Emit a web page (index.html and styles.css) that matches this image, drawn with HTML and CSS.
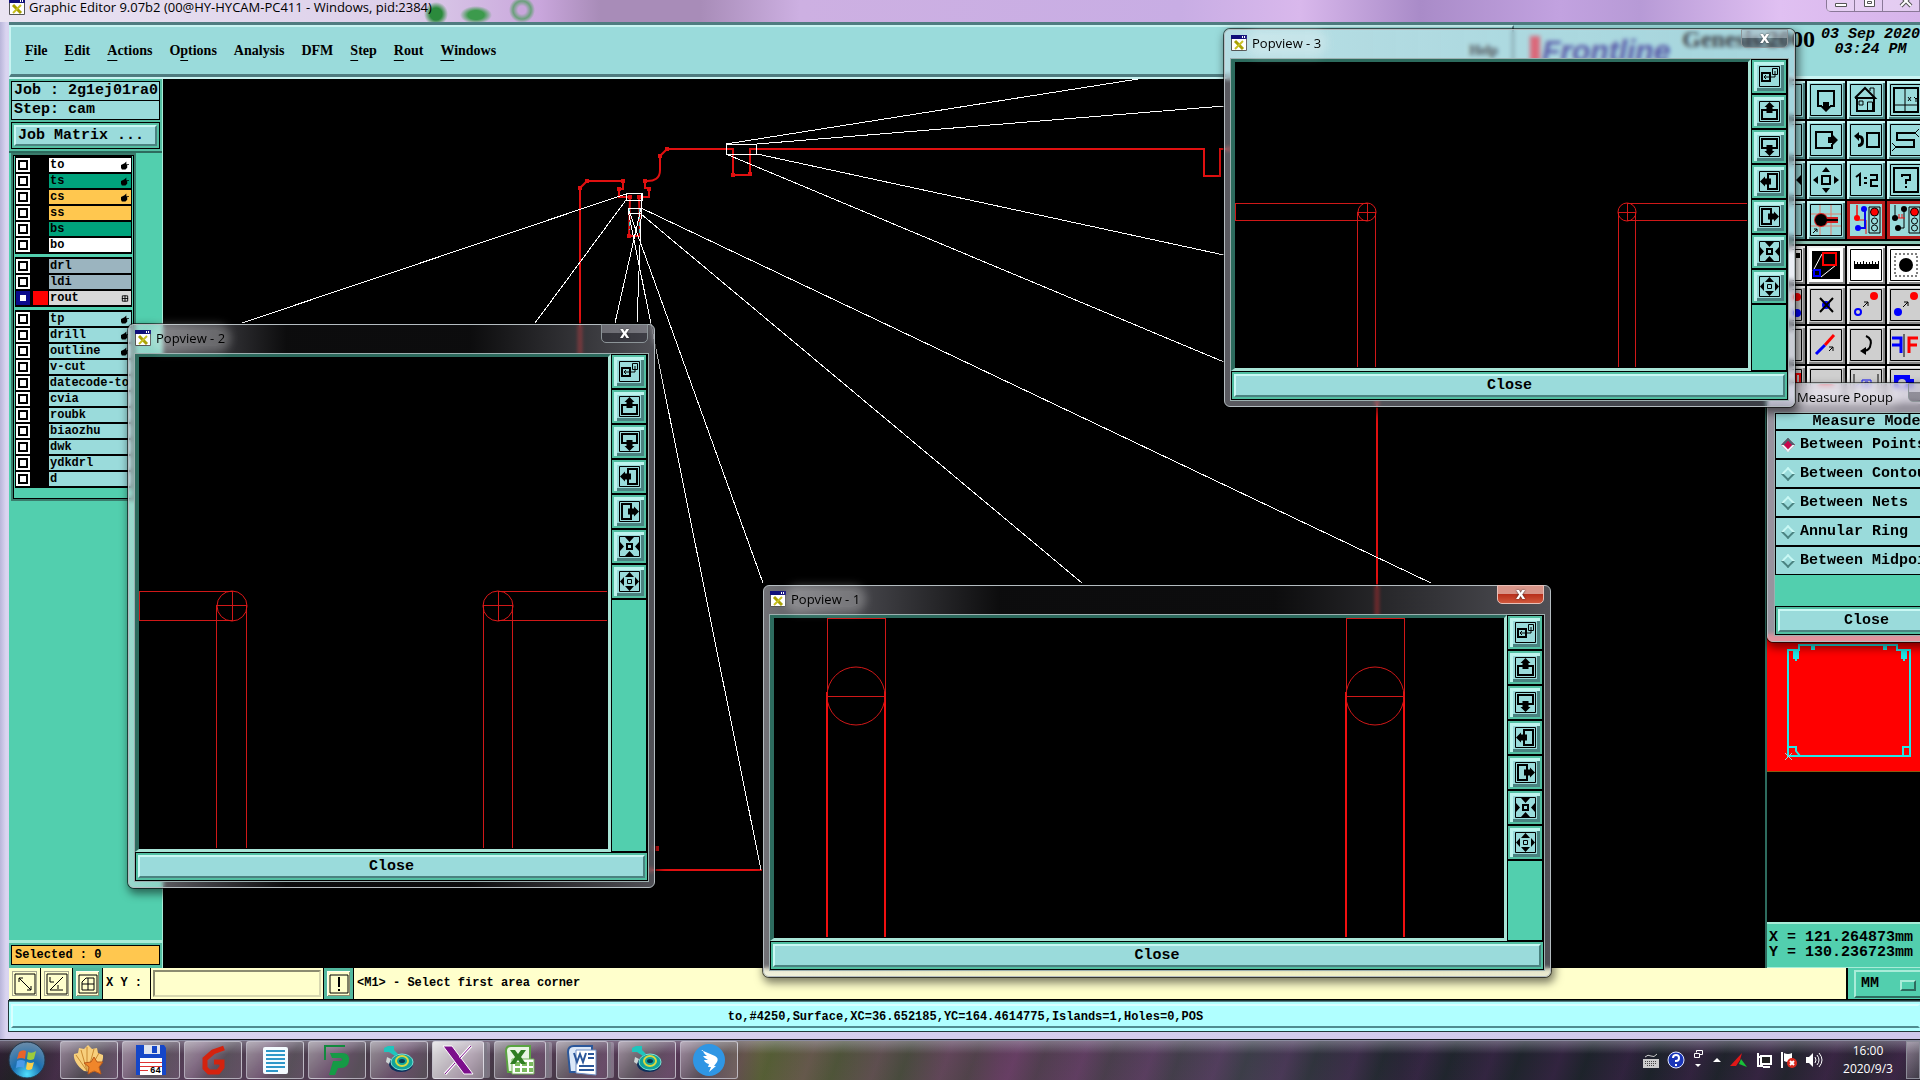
FILE: index.html
```html
<!DOCTYPE html>
<html lang="en">
<head>
  <meta charset="UTF-8">
  <meta name="viewport" content="width=device-width, initial-scale=1.0">
  <title>Graphic Editor 9.07b2</title>
  <link rel="stylesheet" href="styles.css">
</head>
<body>
  <!-- Shared icons -->
  <svg class="sprite" aria-hidden="true">
    <symbol id="i-app" viewBox="0 0 16 16"><path fill="#fff" stroke="#555" d="M.5.5h15v15H.5z"/><path fill="#10107a" d="M0 0h16v4H0z"/><path fill="#fff" d="M11 1h1v2h-1zM13 1h1v2h-1z"/><path stroke="#a8a000" stroke-width="3" d="M4 6l8 8"/><path stroke="#c8c020" stroke-width="2" d="M12 6l-8 8"/></symbol>
    <symbol id="i-pop" viewBox="0 0 21 21"><path fill="none" stroke="#000" d="M.5.5h20v20H.5zM13.500 2.500h5v6h-5zM16 5v6h-5M5 11h6M7 9l-2 2 2 2"/><path fill="none" stroke="#000" stroke-width="2" d="M3 7h8v8H3z"/></symbol>
    <symbol id="i-up" viewBox="0 0 21 21"><path fill="none" stroke="#000" d="M.5.5h20v20H.5z"/><path fill="none" stroke="#000" stroke-width="2" d="M8 9H3v9h15V9h-5"/><path d="M10.500 1l5 5h-2v6h-6V6h-2z"/></symbol>
    <symbol id="i-down" viewBox="0 0 21 21"><path fill="none" stroke="#000" d="M.5.5h20v20H.5z"/><path fill="none" stroke="#000" stroke-width="2" d="M8 12H3V3h15v9h-5"/><path d="M10.500 20l5-5h-2V9h-6v6h-2z"/></symbol>
    <symbol id="i-left" viewBox="0 0 21 21"><path fill="none" stroke="#000" d="M.5.5h20v20H.5z"/><path fill="none" stroke="#000" stroke-width="2" d="M9 8V3h9v15H9v-5"/><path d="M1 10.500l5-5v2h6v6H6v2z"/></symbol>
    <symbol id="i-right" viewBox="0 0 21 21"><path fill="none" stroke="#000" d="M.5.5h20v20H.5z"/><path fill="none" stroke="#000" stroke-width="2" d="M12 8V3H3v15h9v-5"/><path d="M20 10.500l-5-5v2H9v6h6v2z"/></symbol>
    <symbol id="i-in" viewBox="0 0 21 21"><path fill="none" stroke="#000" d="M.5.5h20v20H.5z"/><path fill="none" stroke="#000" stroke-width="2" d="M8 8h5v5H8z"/><path d="M6 1h9l-4.500 5zM6 20h9l-4.500-5zM1 6v9l4-4.500zM20 6v9l-4-4.500z"/></symbol>
    <symbol id="i-out" viewBox="0 0 21 21"><path fill="none" stroke="#000" d="M.5.5h20v20H.5zM8.500 8.500h4v4h-4z"/><path d="M6 6h9l-4.500-5zM6 15h9l-4.500 5zM5 6v9l-4-4.500zM16 6v9l4-4.500z"/></symbol>
    <symbol id="i-hand" viewBox="0 0 9 9"><path d="M0 4l4-2 2-2v3h3v1H7v3L5 9H1L0 7z"/></symbol>
    <symbol id="i-reel" viewBox="0 0 32 32"><ellipse cx="18" cy="20" rx="12" ry="8" fill="#0b2f5c"/><ellipse cx="19" cy="18" rx="11" ry="8" fill="#12a39b" stroke="#7de3d6"/><ellipse cx="19" cy="17" rx="6" ry="5" fill="none" stroke="#d8d840" stroke-width="2"/><ellipse cx="19" cy="17" rx="3" ry="2" fill="#083d52"/><path d="M1 4l4-2h6v4l4 4-3 2-6-4H1z" fill="#1fc5bd"/><path d="M4 13l4 2-2 5-3-2z" fill="#cdd5d5"/></symbol>
  </svg>

  <div class="editor">
    <header class="titlebar">
      <svg class="app-icon"><use href="#i-app"/></svg>
      <h1>Graphic Editor 9.07b2 (00@HY-HYCAM-PC411 - Windows, pid:2384)</h1>
      <div class="window-buttons">
        <button type="button" aria-label="Minimize"><svg viewBox="0 0 28 12"><path fill="#fff" stroke="#555" d="M8.500 3.500h11v3h-11z"/></svg></button>
        <button type="button" aria-label="Maximize"><svg viewBox="0 0 28 12"><path fill="#fff" stroke="#555" d="M9.500-3.500h10v10h-10zM12.500 1.500h4v2h-4z"/></svg></button>
        <button type="button" class="wide" aria-label="Close window"><svg viewBox="0 0 28 12"><path stroke="#555" stroke-width="4" d="M4-4l10 10M14-4L4 6"/><path stroke="#fff" stroke-width="2" d="M4-4l10 10M14-4L4 6"/></svg></button>
      </div>
    </header>

    <div class="menubar">
      <nav class="menus">
        <a href="#"><u>F</u>ile</a>
        <a href="#"><u>E</u>dit</a>
        <a href="#"><u>A</u>ctions</a>
        <a href="#">O<u>p</u>tions</a>
        <a href="#">Analysis</a>
        <a href="#">DFM</a>
        <a href="#"><u>S</u>tep</a>
        <a href="#"><u>R</u>out</a>
        <a href="#"><u>W</u>indows</a>
        <a href="#" class="help">Help</a>
      </nav>
      <div class="brand">
        <span class="logo"><i></i>Frontline</span>
        <span class="product">Genesis 2000</span>
        <time>03 Sep 2020<br>03:24 PM</time>
      </div>
    </div>

    <main class="workspace">
      <aside class="sidebar">
        <div class="field">Job : 2g1ej01ra0</div>
        <div class="field">Step: cam</div>
        <div class="matrix"><button type="button">Job Matrix ...</button></div>
        <div class="layer-panel">
          <div class="layers">
            <div class="layer-group">
              <label class="layer"><input type="checkbox"><span class="swatch"></span><span class="name white">to<svg><use href="#i-hand"/></svg></span></label>
              <label class="layer"><input type="checkbox"><span class="swatch"></span><span class="name green">ts<svg><use href="#i-hand"/></svg></span></label>
              <label class="layer"><input type="checkbox"><span class="swatch"></span><span class="name orange">cs<svg><use href="#i-hand"/></svg></span></label>
              <label class="layer"><input type="checkbox"><span class="swatch"></span><span class="name orange">ss</span></label>
              <label class="layer"><input type="checkbox"><span class="swatch"></span><span class="name green">bs</span></label>
              <label class="layer"><input type="checkbox"><span class="swatch"></span><span class="name white">bo</span></label>
            </div>
            <div class="layer-group">
              <label class="layer"><input type="checkbox"><span class="swatch"></span><span class="name slate">drl</span></label>
              <label class="layer"><input type="checkbox"><span class="swatch"></span><span class="name slate">ldi</span></label>
              <label class="layer"><input type="checkbox" checked><span class="swatch red"></span><span class="name grey">rout<svg viewBox="0 0 9 9"><path fill="none" stroke="#000" d="M1.500 1.500h6v6h-6zM4.500 1v7M1 4.500h7"/></svg></span></label>
            </div>
            <div class="layer-group">
              <label class="layer"><input type="checkbox"><span class="swatch"></span><span class="name">tp<svg><use href="#i-hand"/></svg></span></label>
              <label class="layer"><input type="checkbox"><span class="swatch"></span><span class="name">drill<svg><use href="#i-hand"/></svg></span></label>
              <label class="layer"><input type="checkbox"><span class="swatch"></span><span class="name">outline<svg><use href="#i-hand"/></svg></span></label>
              <label class="layer"><input type="checkbox"><span class="swatch"></span><span class="name">v-cut</span></label>
              <label class="layer"><input type="checkbox"><span class="swatch"></span><span class="name">datecode-to</span></label>
              <label class="layer"><input type="checkbox"><span class="swatch"></span><span class="name">cvia</span></label>
              <label class="layer"><input type="checkbox"><span class="swatch"></span><span class="name">roubk</span></label>
              <label class="layer"><input type="checkbox"><span class="swatch"></span><span class="name">biaozhu</span></label>
              <label class="layer"><input type="checkbox"><span class="swatch"></span><span class="name">dwk</span></label>
              <label class="layer"><input type="checkbox"><span class="swatch"></span><span class="name">ydkdrl</span></label>
              <label class="layer"><input type="checkbox"><span class="swatch"></span><span class="name">d</span></label>
            </div>
          </div>
        </div>
        <div class="selected">Selected : 0</div>
      </aside>

      <div class="board">
        <svg viewBox="163 79 1602 889" preserveAspectRatio="xMinYMin meet">
          <g fill="none" stroke="#e01010" stroke-width="2">
            <path d="M762 870H580V188L587 181H623V189H619V197H630L629 236H640L639 197H649V188H645V181Q660 182 660 170V156L667 149H733V175H750V149H1204V176H1220V149H1370L1377 156V870H1300"/>
          </g>
          <path fill="#e01010" d="M578 186h4v4h-4zM585 179h4v4h-4zM621 179h4v4h-4zM617 187h4v4h-4zM647 187h4v4h-4zM643 179h4v4h-4zM658 154h4v4h-4zM665 147h4v4h-4zM731 173h4v4h-4zM748 172h4v4h-4zM627 234h4v4h-4zM628 195h4v4h-4zM637 195h4v4h-4zM654 846h5v5h-5z"/>
          <path stroke="#40c8c8" stroke-dasharray="4 3" d="M629.500 208v22M639.500 208v28"/>
          <g fill="none" stroke="#fff" shape-rendering="crispEdges">
            <path d="M726.500 144.500h30v10h-30zM626.500 193.500h16v7h-16zM628.500 208.500h13v5h-13z"/>
            <path d="M626 194L242 323M626 200L535 323M641 208L615 323M642 194L637 323M628 210L761 870M628 208L763 583M641 208L1431 583M641 214L1082 583M726 144L1138 79M757 144L1224 106M757 154L1224 255M726 154L1224 362"/>
          </g>
        </svg>
      </div>

      <aside class="tools">
        <div class="tool-grid">
          <button type="button" aria-label="Pan up"><svg viewBox="0 0 32 32"><path fill="none" stroke="#000" d="M.5.5h31v31H.5z"/></svg></button>
          <button type="button" aria-label="Pan down"><svg viewBox="0 0 32 32"><path fill="none" stroke="#000" d="M.5.5h31v31H.5z"/><path fill="none" stroke="#000" stroke-width="2" d="M12 22H8V7h16v15h-4"/><path d="M13 18h6v4h3l-6 6-6-6h3z"/></svg></button>
          <button type="button" aria-label="Home"><svg viewBox="0 0 32 32"><path fill="none" stroke="#000" d="M.5.5h31v31H.5zM9 17h4v4H9zM17.500 27v-9h5v9M20 7V4h4v9"/><path fill="none" stroke="#000" stroke-width="2" d="M5 14L15 4l10 10H5M7 14v13h17V14"/></svg></button>
          <button type="button" aria-label="XY view"><svg viewBox="0 0 32 32"><path fill="none" stroke="#000" d="M.5.5h31v31H.5zM15 4v24M4 21h24M18 13l3 4M21 13l-3 4M24 13l2 2 2-2M26 15v3"/><path fill="none" stroke="#000" stroke-width="2" d="M4 4h24v24H4z"/></svg></button>

          <button type="button" aria-label="Pan left"><svg viewBox="0 0 32 32"><path fill="none" stroke="#000" d="M.5.5h31v31H.5z"/></svg></button>
          <button type="button" aria-label="Pan right"><svg viewBox="0 0 32 32"><path fill="none" stroke="#000" d="M.5.5h31v31H.5z"/><path fill="none" stroke="#000" stroke-width="2" d="M22 13V8H6v16h16v-4"/><path d="M18 13h4v-3l6 6-6 6v-3h-4z"/></svg></button>
          <button type="button" aria-label="Previous view"><svg viewBox="0 0 32 32"><path fill="none" stroke="#000" d="M.5.5h31v31H.5z"/><path fill="none" stroke="#000" stroke-width="2" d="M17 9h12v14H17z"/><path d="M4 12l5-4v3q5 0 5 6t-6 6v-3q3 0 3-3t-2-3v3z"/></svg></button>
          <button type="button" aria-label="Serpentine"><svg viewBox="0 0 32 32"><path fill="none" stroke="#000" d="M.5.5h31v31H.5zM25 9l4-4M25 9l4 4M6 23l-4-4M6 23l-4 4"/><path fill="none" stroke="#000" stroke-width="2" d="M25 9H7v7h17v7H6"/></svg></button>

          <button type="button" aria-label="Zoom in"><svg viewBox="0 0 32 32"><path fill="none" stroke="#000" d="M.5.5h31v31H.5z"/><path d="M31 11v10l-5-5z"/></svg></button>
          <button type="button" aria-label="Zoom out"><svg viewBox="0 0 32 32"><path fill="none" stroke="#000" d="M.5.5h31v31H.5z"/><path fill="none" stroke="#000" stroke-width="2" d="M12 12h8v8h-8z"/><path d="M12 8h8l-4-5zM12 24h8l-4 5zM8 12v8l-5-4zM24 12v8l5-4z"/></svg></button>
          <button type="button" aria-label="Scale 1:2"><svg viewBox="0 0 32 32"><path fill="none" stroke="#000" d="M.5.5h31v31H.5z"/><path fill="none" stroke="#000" stroke-width="2" d="M6 13l4-3v12M20 11h7v5h-6v6h7"/><path d="M14 13h3v2h-3zM14 18h3v2h-3z"/></svg></button>
          <button type="button" aria-label="Query"><svg viewBox="0 0 32 32"><path fill="none" stroke="#000" d="M.5.5h31v31H.5z"/><path fill="none" stroke="#000" stroke-width="2" d="M4 4h24v24H4zM12 13v-2h8v5h-4v4M16 22v2"/></svg></button>

          <button type="button" aria-label="Grid"><svg viewBox="0 0 32 32"><path fill="none" stroke="#000" d="M.5.5h31v31H.5z"/></svg></button>
          <button type="button" aria-label="Snap"><svg viewBox="0 0 32 32"><path stroke="#e08070" d="M10 1v30M21 1v30M1 10h30M1 22h30"/><path fill="none" stroke="#000" d="M.5.5h31v31H.5zM3 29l4-4M4 25h3v3"/><path stroke="#d02020" stroke-width="6" d="M10 16h18"/><circle cx="11" cy="16" r="7" fill="#d02020"/><path stroke="#000" stroke-width="2" d="M10 16h18"/><circle cx="11" cy="16" r="6"/></svg></button>
          <button type="button" class="alert" aria-label="Net highlight"><svg viewBox="0 0 32 32"><path fill="none" stroke="#f01010" d="M7 1v15h9v14M7 12V1"/><path fill="none" stroke="#0808f0" stroke-width="2" d="M15 6v18H9"/><circle cx="7" cy="14" r="3" fill="#f00"/><circle cx="14" cy="5" r="3" fill="#00f"/><circle cx="8" cy="24" r="3" fill="#00f"/><path fill="none" stroke="#000" d="M19 3h11v26H19z"/><g stroke="#000"><circle cx="24.500" cy="8" r="4" fill="#f00"/><circle cx="24.500" cy="17" r="3" fill="none"/><circle cx="24.500" cy="24" r="3" fill="none"/></g></svg></button>
          <button type="button" class="alert" aria-label="Net check"><svg viewBox="0 0 32 32"><path fill="none" stroke="#000" d="M5 1v13M14 6v18H8"/><path stroke="#f01010" d="M7 14h8M9 10v4M12 10v4"/><circle cx="5" cy="14" r="3"/><circle cx="14" cy="5" r="3"/><circle cx="8" cy="24" r="3"/><path fill="none" stroke="#000" d="M19 3h11v26H19z"/><g stroke="#000"><circle cx="24.500" cy="8" r="4" fill="#f00"/><circle cx="24.500" cy="17" r="3" fill="none"/><circle cx="24.500" cy="24" r="3" fill="none"/></g></svg></button>
        </div>
        <div class="tool-grid edit">
          <button type="button" class="white" aria-label="Select"><svg viewBox="0 0 32 32"><path fill="none" stroke="#000" d="M.5.5h31v31H.5z"/><path d="M26 4h4v5h-4z"/></svg></button>
          <button type="button" class="white" aria-label="Popview"><svg viewBox="0 0 32 32"><path d="M2 2h28v28H2z"/><path stroke="#fff" d="M3 22L12 5M11 28l15-12"/><path fill="none" stroke="#f00" stroke-width="2" d="M13 4h13v12H13z"/><path fill="none" stroke="#00f" stroke-width="2" d="M4 21h6v6H4z"/></svg></button>
          <button type="button" class="white" aria-label="Measure"><svg viewBox="0 0 32 32"><path fill="none" stroke="#000" d="M.5.5h31v31H.5z"/><path d="M4 15h25v5H4z"/><path stroke="#000" d="M4.500 12v6M7.500 13v5M10.500 13v5M13.500 12v6M16.500 13v5M19.500 13v5M22.500 12v6M25.500 13v5M28.500 12v6"/></svg></button>
          <button type="button" class="white" aria-label="Feature select"><svg viewBox="0 0 32 32"><path fill="none" stroke="#000" d="M.5.5h31v31H.5z"/><path fill="none" stroke="#000" stroke-dasharray="2 2" d="M5 5h22v22H5z"/><circle cx="16" cy="16" r="7"/></svg></button>

          <button type="button" aria-label="Add"><svg viewBox="0 0 32 32"><path fill="none" stroke="#000" d="M.5.5h31v31H.5z"/><circle cx="27" cy="8" r="4" fill="#f00"/><circle cx="27" cy="24" r="4" fill="#00f"/></svg></button>
          <button type="button" aria-label="Delete"><svg viewBox="0 0 32 32"><path fill="none" stroke="#000" d="M.5.5h31v31H.5z"/><circle cx="16" cy="16" r="4" fill="#00f"/><path stroke="#000" stroke-width="2" d="M10 9l13 14M23 9L10 23"/></svg></button>
          <button type="button" aria-label="Move"><svg viewBox="0 0 32 32"><path fill="none" stroke="#000" d="M.5.5h31v31H.5zM13 18l5-5M14 13h4v4"/><circle cx="24" cy="7" r="4" fill="#f00"/><circle cx="8" cy="23" r="3" fill="none" stroke="#00f" stroke-width="2"/></svg></button>
          <button type="button" aria-label="Copy"><svg viewBox="0 0 32 32"><path fill="none" stroke="#000" d="M.5.5h31v31H.5zM13 18l5-5M14 13h4v4"/><circle cx="24" cy="7" r="4" fill="#f00"/><circle cx="8" cy="23" r="4" fill="#00f"/></svg></button>

          <button type="button" aria-label="Stretch"><svg viewBox="0 0 32 32"><path fill="none" stroke="#000" d="M.5.5h31v31H.5z"/></svg></button>
          <button type="button" aria-label="Break line"><svg viewBox="0 0 32 32"><path fill="none" stroke="#000" d="M.5.5h31v31H.5zM19 22l4-4M19 18h4v4"/><path stroke="#00f" stroke-width="3" d="M6 25l9-9"/><path stroke="#f00" stroke-width="3" d="M15 16l9-10"/></svg></button>
          <button type="button" aria-label="Rotate"><svg viewBox="0 0 32 32"><path fill="none" stroke="#000" d="M.5.5h31v31H.5z"/><path fill="none" stroke="#000" stroke-width="2" d="M16 7q7 3 4 11-2 4-7 4"/><path d="M10 22l6-4v8z"/></svg></button>
          <button type="button" aria-label="Mirror"><svg viewBox="0 0 32 32"><path fill="none" stroke="#000" d="M.5.5h31v31H.5zM14 5v23"/><path fill="none" stroke="#00f" stroke-width="3" d="M2 9h9v15M11 16H2"/><path fill="none" stroke="#f00" stroke-width="3" d="M28 9h-9v15M19 16h8"/></svg></button>

          <button type="button" aria-label="Resize"><svg viewBox="0 0 32 32"><path fill="none" stroke="#000" d="M.5.5h31v31H.5z"/><path fill="none" stroke="#f00" stroke-width="2" d="M26 5h4v9h-4z"/></svg></button>
          <button type="button" aria-label="Merge"><svg viewBox="0 0 32 32"><path fill="none" stroke="#000" d="M.5.5h31v31H.5z"/><path fill="#f00" d="M6 17q10-6 20 0z"/></svg></button>
          <button type="button" aria-label="Spacing"><svg viewBox="0 0 32 32"><path fill="none" stroke="#000" d="M.5.5h31v31H.5zM4 5v20M28 5v20"/><path fill="none" stroke="#00f" d="M12 11h9v7h-9zM15 13h3v3h-3zM5 18l5-4"/></svg></button>
          <button type="button" aria-label="Fill"><svg viewBox="0 0 32 32"><path fill="none" stroke="#000" d="M.5.5h31v31H.5z"/><path fill="#00f" d="M4 6h16v4h4v9H4z"/><circle cx="12" cy="14" r="4" fill="#d0d0d0"/></svg></button>
        </div>
        <div class="overview">
          <svg viewBox="0 0 153 137" preserveAspectRatio="xMinYMin meet">
            <g fill="none" stroke="#20e8e8" stroke-width="2">
              <path d="M21 16h11V11h98v5h13v106H21zM27 16v8h4v-7M29 17v10M139 16v8h-4v-7M137 17v10M21 113h8v4l4 5M143 113h-7v9"/>
            </g>
            <path fill="#20e8e8" d="M44 11h4v5h-4zM116 11h4v5h-4z"/>
            <path stroke="#a0d0d0" d="M18 119l7 7M25 119l-7 7"/>
          </svg>
        </div>
        <div class="empty-view"></div>
        <div class="coords">X = 121.264873mm<br>Y = 130.236723mm</div>
      </aside>
    </main>

    <div class="prompt">
      <button type="button" class="flat" aria-label="Absolute"><svg viewBox="0 0 22 22"><path fill="none" stroke="#000" d="M1 1h20v20H1zM5 5l12 12M5 9V5h4M17 13v4h-4"/></svg></button>
      <button type="button" class="flat" aria-label="Relative"><svg viewBox="0 0 22 22"><path fill="none" stroke="#000" d="M1 1h20v20H1zM4 17L17 4M4 17h13M4 4v5h4M12 12v4"/></svg></button>
      <button type="button" aria-label="Grid snap"><svg viewBox="0 0 22 22"><path fill="none" stroke="#000" d="M2 2h18v18H2zM5 9l4-4h8v12H5zM11 5v12M5 11h12"/></svg></button>
      <label for="xy">X Y :</label>
      <div class="xy-box"><input type="text" id="xy" name="xy" value=""></div>
      <button type="button" aria-label="Warning"><svg viewBox="0 0 22 22"><path fill="none" stroke="#000" d="M2 2h18v18H2z"/><path d="M10 4h2v10h-2zM10 16h2v2h-2z"/></svg></button>
      <output class="message">&lt;M1&gt; - Select first area corner</output>
      <div class="units">
        <select name="units" aria-label="Units"><option>MM</option><option>INCH</option></select>
      </div>
    </div>
    <div class="status"><p>to,#4250,Surface,XC=36.652185,YC=164.4614775,Islands=1,Holes=0,POS</p></div>
  </div>

  <!-- Measure window -->
  <section class="popup measure">
    <header><h2>Measure Popup</h2><button type="button" class="close-x" aria-label="Close window">x</button></header>
    <div class="client">
      <h3>Measure Mode</h3>
      <label><input type="radio" name="mode" checked>Between Points</label>
      <label><input type="radio" name="mode">Between Contours</label>
      <label><input type="radio" name="mode">Between Nets</label>
      <label><input type="radio" name="mode">Annular Ring</label>
      <label><input type="radio" name="mode">Between Midpoints</label>
      <div class="filler"></div>
      <div class="close-bar"><button type="button">Close</button></div>
    </div>
  </section>

  <section class="popup popview pv3">
    <header><svg class="app-icon"><use href="#i-app"/></svg><h2>Popview - 3</h2><button type="button" class="close-x" aria-label="Close window">x</button></header>
    <div class="client">
      <div class="view">
        <svg viewBox="1235 62 513 306" preserveAspectRatio="xMinYMin meet"><g fill="none" stroke="#d01818" shape-rendering="crispEdges"><path d="M1367 203.500H1235.500V220.500H1367M1357.500 212V367M1375.500 212V367M1627 203.500H1747M1627 220.500H1747M1618.500 212V367M1635.500 212V367M1358 212.500H1376M1367.500 203V221M1618 212.500H1636M1627.500 203V221"/></g><g fill="none" stroke="#e01818"><circle cx="1367" cy="212" r="9"/><circle cx="1627" cy="212" r="9"/></g></svg>
      </div>
      <div class="view-tools">
        <button type="button" aria-label="New popview"><svg><use href="#i-pop"/></svg></button>
        <button type="button" aria-label="Pan up"><svg><use href="#i-up"/></svg></button>
        <button type="button" aria-label="Pan down"><svg><use href="#i-down"/></svg></button>
        <button type="button" aria-label="Pan left"><svg><use href="#i-left"/></svg></button>
        <button type="button" aria-label="Pan right"><svg><use href="#i-right"/></svg></button>
        <button type="button" aria-label="Zoom in"><svg><use href="#i-in"/></svg></button>
        <button type="button" aria-label="Zoom out"><svg><use href="#i-out"/></svg></button>
        <span></span>
      </div>
      <div class="close-bar"><button type="button">Close</button></div>
    </div>
  </section>

  <section class="popup popview pv2">
    <header><svg class="app-icon"><use href="#i-app"/></svg><h2>Popview - 2</h2><button type="button" class="close-x" aria-label="Close window">x</button></header>
    <div class="client">
      <div class="view">
        <svg viewBox="139 357 469 492" preserveAspectRatio="xMinYMin meet"><g fill="none" stroke="#d01818" shape-rendering="crispEdges"><path d="M232 591.500H139.500V620.500H232M216.500 605V848M246.500 605V848M498 591.500H607M498 620.500H607M483.500 605V848M512.500 605V848M217 605.500H247M232.500 591V621M483 605.500H513M498.500 591V621"/></g><g fill="none" stroke="#e01818"><circle cx="232" cy="606" r="15"/><circle cx="498" cy="606" r="15"/></g></svg>
      </div>
      <div class="view-tools">
        <button type="button" aria-label="New popview"><svg><use href="#i-pop"/></svg></button>
        <button type="button" aria-label="Pan up"><svg><use href="#i-up"/></svg></button>
        <button type="button" aria-label="Pan down"><svg><use href="#i-down"/></svg></button>
        <button type="button" aria-label="Pan left"><svg><use href="#i-left"/></svg></button>
        <button type="button" aria-label="Pan right"><svg><use href="#i-right"/></svg></button>
        <button type="button" aria-label="Zoom in"><svg><use href="#i-in"/></svg></button>
        <button type="button" aria-label="Zoom out"><svg><use href="#i-out"/></svg></button>
        <span></span>
      </div>
      <div class="close-bar"><button type="button">Close</button></div>
    </div>
  </section>

  <section class="popup popview pv1 active">
    <header><svg class="app-icon"><use href="#i-app"/></svg><h2>Popview - 1</h2><button type="button" class="close-x" aria-label="Close window">x</button></header>
    <div class="client">
      <div class="view">
        <svg viewBox="774 618 730 320" preserveAspectRatio="xMinYMin meet"><g fill="none" stroke="#d01818" shape-rendering="crispEdges"><path d="M827.500 696V618.500H885.500V696.500H827M1346.500 696V618.500H1404.500V696.500H1346"/><path stroke="#f01010" stroke-width="2" d="M827 692V937M885 692V937M1346 692V937M1404 692V937"/></g><g fill="none" stroke="#d01818"><circle cx="856" cy="696" r="29"/><circle cx="1375" cy="696" r="29"/></g></svg>
      </div>
      <div class="view-tools">
        <button type="button" aria-label="New popview"><svg><use href="#i-pop"/></svg></button>
        <button type="button" aria-label="Pan up"><svg><use href="#i-up"/></svg></button>
        <button type="button" aria-label="Pan down"><svg><use href="#i-down"/></svg></button>
        <button type="button" aria-label="Pan left"><svg><use href="#i-left"/></svg></button>
        <button type="button" aria-label="Pan right"><svg><use href="#i-right"/></svg></button>
        <button type="button" aria-label="Zoom in"><svg><use href="#i-in"/></svg></button>
        <button type="button" aria-label="Zoom out"><svg><use href="#i-out"/></svg></button>
        <span></span>
      </div>
      <div class="close-bar"><button type="button">Close</button></div>
    </div>
  </section>

  <footer class="taskbar">
    <button type="button" class="start" aria-label="Start"><svg viewBox="0 0 38 38"><defs><radialGradient id="orb" cx=".5" cy=".9" r=".9"><stop offset="0" stop-color="#4fe0ff"/><stop offset=".45" stop-color="#1b6fb0"/><stop offset="1" stop-color="#6d8ca8"/></radialGradient></defs><circle cx="19" cy="19" r="18" fill="url(#orb)" stroke="#22384d"/><path fill="#e8642a" d="M11 11q4-3 7-1l-1 8q-4-2-8 0z"/><path fill="#9ccb3b" d="M20 11q4 2 8-1l-2 8q-4 2-7 0z"/><path fill="#4c9be8" d="M9 20q4-2 8 0l-1 7q-4-2-8 0z"/><path fill="#fbd04a" d="M19 21q4 2 7 0l-2 7q-4 2-6 0z"/></svg></button>
    <button type="button" class="task" aria-label="Shell"><svg viewBox="0 0 32 32"><path fill="#f7cf7c" d="M11 27C4 22 0 15 1 10l4-1 1-5 5 1 4-4 4 4 5-1 1 5 5 2c1 7-5 14-10 17z"/><path stroke="#c98a32" fill="none" d="M14 27L3 11M14 27L8 6M14 27V3M15 27l6-22M16 27L26 9"/><path fill="#f0862a" stroke="#b8591a" d="M21 13l3 5 6 0-4 5 2 7-7-3-6 3 1-7-5-4 7-1z"/></svg></button>
    <button type="button" class="task" aria-label="File manager"><svg viewBox="0 0 32 32"><path fill="#1546c8" d="M1 1h28l2 3v27H1z"/><path fill="#dfe3ee" d="M9 1h16v9H9z"/><path fill="#1546c8" d="M17 2h5v7h-5z"/><path fill="#fff" d="M5 14h22v17H5z"/><path stroke="#d33" d="M5 18.500h22M5 22.500h22M5 26.500h8"/><text x="15" y="29" class="tiny">64</text></svg></button>
    <button type="button" class="task" aria-label="G"><svg viewBox="0 0 32 32"><path fill="none" stroke="#d4230f" stroke-width="5" d="M27 4L16 8l-8 7v9l4 4h9l4-5v-5h-8"/></svg></button>
    <button type="button" class="task" aria-label="Notes"><svg viewBox="0 0 32 32"><rect x="4" y="3" width="25" height="27" rx="2" fill="#f4fbff"/><path stroke="#2e97c9" stroke-width="2" d="M7 7h19M7 11h19M7 15h19M7 19h19M7 23h19M7 27h12"/></svg></button>
    <button type="button" class="task" aria-label="P"><svg viewBox="0 0 32 32"><path fill="none" stroke="#128a3e" stroke-width="2" d="M4 16V2h20"/><path fill="#169a46" d="M9 9h12q8 0 7 8-1 8-11 7l-3 7H8l4-14h7q4-1 1-3h-9z"/></svg></button>
    <button type="button" class="task" aria-label="Genesis"><svg><use href="#i-reel"/></svg></button>
    <button type="button" class="task stacked current" aria-label="X server"><svg viewBox="0 0 32 32"><path fill="#7c0f8c" stroke="#fff" d="M1 2h9l21 28h-9z"/><path stroke="#fff" stroke-width="3" d="M29 2L18 14M13 19L3 30"/><path stroke="#7c0f8c" d="M29 2L18 14M13 19L3 30"/></svg></button>
    <button type="button" class="task stacked" aria-label="Spreadsheet"><svg viewBox="0 0 32 32"><path fill="#e9f5e4" stroke="#5ba442" stroke-width="2" d="M2 7q0-5 5-5h19v26H4z"/><path fill="#fff" stroke="#73b058" d="M8 15h22v15H8z"/><path fill="#7ab95d" d="M11 18h5v4h-5zM18 18h5v4h-5zM11 24h5v4h-5zM18 24h5v4h-5zM25 18h4v4h-4zM25 24h4v4h-4z"/><path fill="#2f7d22" d="M6 6h5l3 4 3-4h5l-5 7 5 7h-5l-3-4-3 4H6l5-7z"/></svg></button>
    <button type="button" class="task stacked" aria-label="Word processor"><svg viewBox="0 0 32 32"><path fill="#dbe8f8" stroke="#2b579a" stroke-width="2" d="M2 8q0-6 6-6h18v26H4z"/><path fill="#fff" stroke="#6f8fc4" d="M10 6h20v25l-20-2z"/><path fill="none" stroke="#2b579a" stroke-width="2" d="M8 9l3 9 3-8 3 8 3-9M22 10h6M22 14h6M13 22h15M13 26h15"/></svg></button>
    <button type="button" class="task" aria-label="Genesis toolkit"><svg><use href="#i-reel"/></svg></button>
    <button type="button" class="task" aria-label="Messenger"><svg viewBox="0 0 32 32"><circle cx="16" cy="16" r="16" fill="#2f96e4"/><path fill="#fff" d="M8 6l14 6q4 2 2 6l-3 4h2l-7 6 2-5h-3l1-3q-4-1-5-4l4 0q-4-2-5-4l4 0q-4-3-4-6z"/></svg></button>

    <div class="tray">
      <svg viewBox="0 0 18 18"><path fill="#ccc" d="M1 8h16v9H1z"/><path stroke="#444" stroke-dasharray="1 1" d="M3 10.500h12M3 12.500h12M5 14.500h8"/><path fill="none" stroke="#ccc" d="M3 6q3-3 6-1t6-2"/></svg>
      <svg viewBox="0 0 18 18"><circle cx="9" cy="9" r="8" fill="#1a35b8" stroke="#dfe6ff"/><path fill="none" stroke="#fff" stroke-width="2" d="M6 7q0-3 3-3t3 3-3 3v1M9 13v2"/></svg>
      <svg viewBox="0 0 12 22"><path fill="none" stroke="#fff" d="M4.500 3.500v-2h6v4h-3M2.500 4.500h5v4h-5z"/><path fill="#fff" d="M3 15h6l-3 3z"/></svg>
      <svg viewBox="0 0 12 18"><path fill="#fff" d="M2 11h8L6 7z"/></svg>
      <svg viewBox="0 0 18 18"><path fill="#e01818" d="M0 15L12 2l-2 7-4 6z"/><path fill="#18c038" d="M11 8l6 8-8-3z"/></svg>
      <svg viewBox="0 0 18 18"><path fill="#222" stroke="#fff" stroke-width="2" d="M6 5h10v8H6z"/><path fill="none" stroke="#fff" stroke-width="2" d="M3 2v4h2M3 6v9h5M8 16h7"/></svg>
      <svg viewBox="0 0 18 18"><path fill="#fff" d="M1 1h2v16H1zM4 2q4 2 8 0v8q-4 2-8 0z"/><circle cx="12" cy="12" r="5" fill="#d8281c"/><path stroke="#fff" stroke-width="2" d="M10 10l4 4M14 10l-4 4"/></svg>
      <svg viewBox="0 0 18 18"><path fill="#fff" d="M1 6h3l4-4v14l-4-4H1z"/><path fill="none" stroke="#fff" d="M10 6q2 3 0 6M12 4q4 5 0 10M14 2q6 7 0 14"/></svg>
    </div>
    <div class="clock">16:00<br>2020/9/3</div>
    <button type="button" class="show-desktop" aria-label="Show desktop"></button>
  </footer>
</body>
</html>
```

FILE: styles.css
```css
* {
  box-sizing: border-box;
  margin: 0;
  padding: 0;
}
body {
  height: 100vh;
  display: flex;
  flex-direction: column;
  overflow: hidden;
  position: relative;
  background: #c9c3e4;
  color: #000;
  font: bold 15px/18px "Liberation Mono", monospace;
}
button,
input,
select {
  font: inherit;
  color: inherit;
  border: none;
  border-radius: 0;
}
a {
  color: inherit;
  text-decoration: none;
}
svg {
  display: block;
}
.sprite {
  position: absolute;
  width: 0;
  height: 0;
}
.app-icon {
  width: 16px;
  height: 16px;
  flex: none;
}

/* Main window */
.editor {
  flex: 1;
  min-height: 0;
  display: flex;
  flex-direction: column;
  padding: 0 0 8px 9px;
  background: linear-gradient(90deg, #b9b6da 0, #d9d4f0 6px, #cfc8ea 100%);
}
.titlebar {
  height: 22px;
  flex: none;
  display: flex;
  gap: 4px;
  padding-bottom: 8px;
  align-items: center;
  margin-left: -9px;
  padding-left: 9px;
  font: 13px/16px "Open Sans", sans-serif;
  background:
    radial-gradient(circle at 436px 14px, #2b8a3c 0, #2b8a3c 6px, transparent 12px),
    radial-gradient(ellipse 16px 9px at 476px 15px, #3c9a4c 0, #3c9a4c 50%, transparent 100%),
    radial-gradient(circle at 522px 10px, #c9a6dc 0, #c9a6dc 4px, #6ba07c 9px, transparent 13px),
    linear-gradient(90deg, #eae4f2 0, #ddd0ea 400px, #c9a6dc 540px, #a88cb8 600px, #a88cb8 700px, #cdb0e2 800px, #c8ade4 1180px, #d9b8ec 1300px, #a98bc8 1420px, #c2a2e0 1560px, #b79ad6 1640px, #e0c0f2 1780px, #d6b4ea 100%);
}
.titlebar h1 {
  font: inherit;
  flex: 1;
}
.window-buttons {
  display: flex;
  align-self: flex-start;
  height: 12px;
  border: 1px solid #8a7898;
  border-top: none;
  border-right: none;
  border-radius: 0 0 0 5px;
}
.window-buttons button {
  width: 28px;
  height: 11px;
  background: rgba(255, 255, 255, 0.3);
  border-right: 1px solid #8a7898;
}
.window-buttons .wide {
  width: 37px;
  padding-left: 14px;
}
.window-buttons svg {
  width: 28px;
  height: 12px;
}
.menubar {
  height: 57px;
  flex: none;
  display: flex;
  background: #9adbdb;
  border-top: 3px solid #4f7c80;
}
.menus {
  width: 1505px;
  display: flex;
  align-items: center;
  gap: 17px;
  padding: 0 14px;
  font: bold 14px/18px "Liberation Serif", serif;
  border: 2px solid #c9f4f2;
  border-right-color: #4f7c80;
  border-bottom: 3px solid #4f7c80;
  box-shadow: 0 2px 0 #c9f4f2;
  margin-bottom: 2px;
}
.menus u {
  text-underline-offset: 5px;
}
.menus .help {
  margin-left: auto;
}
.brand {
  flex: 1;
  display: flex;
  align-items: flex-start;
  gap: 6px;
  padding: 2px 0 0 16px;
  overflow: hidden;
  white-space: nowrap;
  border-bottom: 3px solid #c9f4f2;
}
.logo {
  width: 148px;
  padding-top: 9px;
  display: flex;
  gap: 2px;
  font: italic bold 30px/30px "Liberation Sans", sans-serif;
  color: #20208a;
}
.logo i {
  width: 10px;
  background: #e03040;
}
.product {
  font: bold 24px/24px "Liberation Serif", serif;
}
.brand time {
  font-style: italic;
  line-height: 15px;
  text-align: center;
}

.workspace {
  flex: 1;
  min-height: 0;
  display: flex;
  background: #000;
}
.sidebar {
  width: 154px;
  flex: none;
  display: flex;
  flex-direction: column;
  padding: 2px 2px 3px 2px;
  background: #55bfa3;
  border-right: 1px solid #a8ecd8;
}
.field {
  height: 20px;
  padding-left: 2px;
  border: 1px solid #000;
  margin-bottom: -1px;
  background: #9adbdb;
  white-space: nowrap;
}
.matrix {
  height: 27px;
  margin: 3px 0 2px;
  padding: 2px;
  border: 1px solid #000;
}
.matrix button {
  width: 100%;
  height: 21px;
  padding-left: 2px;
  text-align: left;
}
.matrix button,
.close-bar button {
  background: #9adbdb;
  border: 2px solid;
  border-color: #c9f8f4 #4a8280 #4a8280 #c9f8f4;
}
.layer-panel {
  flex: 1;
  margin: 0 -2px;
  padding: 2px 28px 0 4px;
  background: #52cfae;
  border-top: 2px solid #2d6b5e;
  border-bottom: 3px solid #a8ecd8;
}
.layers {
  padding: 0 1px 7px;
  border: 1px solid #000;
  outline: 2px solid #3a7c6c;
}
.layer-group {
  padding: 1px;
  background: #000;
  margin-bottom: 3px;
}
.layer {
  height: 16px;
  display: flex;
  padding: 1px 0;
  font-size: 12px;
  line-height: 14px;
}
.layer input {
  appearance: none;
  width: 14px;
  height: 14px;
  background: #fff;
  border: 2px solid #fff;
  box-shadow: inset 0 0 0 2px #000;
}
.layer input:checked {
  border-color: #0b0b8c;
  box-shadow: inset 0 0 0 2px #0b0b8c;
}
.swatch {
  width: 15px;
  margin: 0 1px 0 3px;
}
.swatch.red {
  background: #f00;
}
.name {
  flex: 1;
  display: flex;
  justify-content: space-between;
  align-items: center;
  padding: 0 2px 0 1px;
  background: #9adbdb;
  white-space: nowrap;
}
.name svg {
  width: 8px;
  height: 9px;
}
.name.white { background: #fff; }
.name.green { background: #00a37c; }
.name.orange { background: #ffc74f; }
.name.slate { background: #9bb4bf; }
.name.grey { background: #d8d8d8; }
.selected {
  height: 20px;
  margin-top: 2px;
  padding-left: 3px;
  border: 1px solid #000;
  background: #ffc74f;
  font-size: 12px;
}
.board {
  flex: 1;
  min-width: 0;
  overflow: hidden;
}
.board svg,
.view svg,
.overview svg {
  width: 100%;
  height: 100%;
}

/* Right column */
.tools {
  width: 155px;
  flex: none;
  display: flex;
  flex-direction: column;
  overflow: hidden;
  border-left: 2px solid #2d6b5e;
}
.tool-grid {
  display: grid;
  grid-template-columns: repeat(4, 38px);
  grid-auto-rows: 38px;
  gap: 2px;
  padding: 2px 0 2px;
}
.tool-grid.edit {
  height: 393px;
  align-content: start;
  border-top: 3px solid #8cc4b4;
}
.tool-grid button {
  padding: 3px;
  background: #9adbdb;
  box-shadow: inset 2px 2px 0 #c9f8f4, inset -2px -2px 0 #4a8280;
}
.tool-grid button svg {
  width: 32px;
  height: 32px;
}
.tool-grid .alert {
  box-shadow: inset 0 0 0 3px #b81c1c;
}
.tool-grid.edit button {
  background: #cfcfcf;
  box-shadow: inset 2px 2px 0 #f0f0f0, inset -2px -2px 0 #888;
}
.tool-grid.edit .white {
  background: #fff;
}
.overview {
  height: 138px;
  background: #f00;
  border-bottom: 1px solid #8a5a10;
}
.empty-view {
  flex: 1;
}
.coords {
  height: 46px;
  padding: 6px 0 0 2px;
  line-height: 15px;
  background: #52cfae;
  border-top: 2px solid #a8ecd8;
  border-bottom: 1px solid #a8ecd8;
  white-space: nowrap;
}

/* Prompt and status lines */
.prompt {
  height: 33px;
  flex: none;
  display: flex;
  gap: 1px;
  padding: 0 0 2px;
  background: #000;
  font-size: 12px;
}
.prompt > * {
  background: #ffffcc;
}
.prompt button {
  width: 29px;
  border: 3px solid #52b89e;
  box-shadow: inset 1px 1px 0 #fffff0, inset -1px -1px 0 #8c8c70;
}
.prompt .flat {
  width: 31px;
  border-color: #ffffcc;
  box-shadow: inset 0 0 0 1px #a8a890;
}
.prompt button svg {
  width: 22px;
  height: 22px;
  margin: 0 auto;
}
.prompt label {
  width: 47px;
  padding: 6px 3px;
  white-space: nowrap;
}
.xy-box {
  width: 172px;
  padding: 2px;
}
.xy-box input {
  width: 100%;
  height: 27px;
  background: #ffffcc;
  border: 2px solid;
  border-color: #8c8c70 #d8d8b0 #d8d8b0 #8c8c70;
  padding: 0 4px;
}
.message {
  flex: 1;
  padding: 6px 3px;
}
.prompt .units {
  width: 72px;
  padding: 2px 0 1px 6px;
  margin-left: 1px;
  background: #52cfae;
  overflow: hidden;
  position: relative;
}
.units::after {
  content: "";
  position: absolute;
  right: 4px;
  top: 12px;
  width: 12px;
  height: 7px;
  border: 2px solid;
  border-color: #a8ecd8 #2d6b5e #2d6b5e #a8ecd8;
}
.units select {
  appearance: none;
  width: 80px;
  height: 28px;
  padding-left: 5px;
  font-size: 15px;
  background: #52cfae;
  border: 2px solid;
  border-color: #a8ecd8 #2d6b5e #2d6b5e #a8ecd8;
}
.status {
  height: 30px;
  flex: none;
  padding: 2px 0 2px 2px;
  background: #b0ffff;
  border-top: 1px solid #5a8084;
  outline: 1px solid #203838;
}
.status p {
  height: 24px;
  line-height: 22px;
  font-size: 12px;
  text-align: center;
  border: 2px solid;
  border-color: #d8ffff transparent #4f8c90 #d8ffff;
}

/* Floating windows */
.popup {
  position: absolute;
  display: flex;
  flex-direction: column;
  padding: 0 6px;
  padding-bottom: 6px;
  border: 1px solid #b4bcc0;
  border-radius: 6px;
  backdrop-filter: blur(2px);
  background: linear-gradient(90deg, rgba(225, 225, 235, 0.5) 0, rgba(200, 200, 215, 0.3) 15%, rgba(120, 120, 130, 0.1) 30%, rgba(120, 120, 130, 0.1) 65%, rgba(200, 200, 215, 0.4) 100%);
  box-shadow: 0 0 0 1px rgba(0, 0, 0, 0.6), 2px 4px 8px 2px rgba(0, 0, 0, 0.5);
}
.popup header {
  height: 29px;
  flex: none;
  display: flex;
  align-items: center;
  gap: 5px;
  padding-bottom: 3px;
  position: relative;
}
.popup h2 {
  font: 13px/16px "Open Sans", sans-serif;
  border-radius: 8px;
  background: rgba(255, 255, 255, 0.25);
  box-shadow: 0 0 8px 6px rgba(255, 255, 255, 0.25);
}
.close-x {
  position: absolute;
  top: -1px;
  right: 0;
  width: 47px;
  height: 19px;
  padding-bottom: 3px;
  border: 1px solid #8c9498;
  border-radius: 0 0 5px 5px;
  background: linear-gradient(rgba(180, 180, 190, 0.4) 50%, rgba(40, 40, 50, 0.4) 50%);
  font: bold 16px/12px "Open Sans", sans-serif;
  text-shadow: 0 0 2px #222;
}
.popup .close-x {
  color: #fff;
}
.active .close-x {
  background: linear-gradient(#d89488 45%, #b8301c 50%, #d0583c);
  border-color: #e8c0b8;
}
.client {
  flex: 1;
  min-height: 0;
  box-shadow: 0 0 0 1px #9cb0b0;
  background: #000;
}
.popview .client {
  display: grid;
  grid-template-columns: 1fr 37px;
  grid-template-rows: minmax(0, 1fr) 29px;
}
.view {
  background: #000;
  border: 3px solid;
  border-left-width: 4px;
  border-color: #2d6b5e #a8e4d6 #a8e4d6 #2d6b5e;
  overflow: hidden;
}
.view-tools {
  display: flex;
  flex-direction: column;
  gap: 2px;
  padding: 1px 2px 1px 1px;
}
.view-tools button {
  height: 33px;
  flex: none;
  border: 2px solid #52bfa2;
  background: #9adbdb;
  box-shadow: inset 3px 3px 0 #bdf4ee, inset -3px -3px 0 #4a8280;
  display: grid;
  place-items: center;
}
.view-tools svg {
  width: 21px;
  height: 21px;
}
.view-tools span {
  flex: 1;
  background: #52cfae;
}
.close-bar {
  grid-column: 1 / -1;
  height: 29px;
  padding: 2px;
  background: #52bfa2;
  border: 1px solid #000;
}
.close-bar button {
  width: 100%;
  height: 23px;
  line-height: 18px;
}
.pv1 {
  left: 763px;
  top: 585px;
  width: 788px;
  height: 392px;
}
.pv2 {
  left: 128px;
  top: 324px;
  width: 527px;
  height: 564px;
}
.pv3 {
  left: 1224px;
  top: 29px;
  width: 571px;
  height: 378px;
  background: linear-gradient(90deg, rgba(225, 225, 240, 0.4), rgba(190, 200, 225, 0.3));
}
.measure {
  left: 1767px;
  top: 383px;
  width: 198px;
  height: 259px;
  background: rgba(215, 210, 225, 0.7);
}
.measure header {
  padding-left: 23px;
}
.measure .close-x {
  right: 3px;
}
.measure .client {
  display: flex;
  flex-direction: column;
  margin-left: 1px;
}
.measure h3,
.measure label {
  font: inherit;
  background: #9adbdb;
  border: 1px solid #000;
  white-space: nowrap;
}
.measure h3 {
  height: 17px;
  line-height: 16px;
  text-align: center;
}
.measure label {
  height: 29px;
  display: flex;
  align-items: center;
  gap: 7px;
  padding-left: 6px;
}
.measure input {
  appearance: none;
  width: 10px;
  height: 10px;
  flex: none;
  margin-left: 1px;
  transform: rotate(45deg);
  border: 2px solid;
  border-color: #c9f8f4 #4a8280 #4a8280 #c9f8f4;
}
.measure input:checked {
  background: #c8064c;
  border-color: #4a6870 #e8f8f8 #e8f8f8 #4a6870;
}
.filler {
  flex: 1;
  background: #52cfae;
}

/* Taskbar */
.taskbar {
  height: 41px;
  flex: none;
  display: flex;
  align-items: stretch;
  gap: 4px;
  padding: 1px 0;
  border-top: 1px solid #14141c;
  box-shadow: inset 0 1px 0 #8c8ca0;
  background:
    linear-gradient(rgba(200, 200, 215, 0.4), transparent 14px),
    repeating-linear-gradient(110deg, rgba(160, 80, 140, 0.2) 0, rgba(60, 80, 40, 0.2) 26px, rgba(160, 80, 140, 0.2) 64px),
    linear-gradient(90deg, #15131f 0, #4a3a52 120px, #45314a 700px, #5c6238 760px, #4b4a42 900px, #5a3a5a 1000px, #3b3950 1250px, #1a1c30 1400px, #14172a 1650px, #241c34 100%);
}
.start {
  width: 56px;
  background: none;
  padding-left: 8px;
}
.start svg {
  width: 38px;
  height: 38px;
}
.task {
  width: 58px;
  border: 1px solid rgba(225, 225, 235, 0.6);
  border-radius: 3px;
  background: linear-gradient(135deg, rgba(255, 255, 255, 0.45), rgba(255, 255, 255, 0.1) 60%);
}
.task.stacked {
  width: 52px;
  margin-right: 6px;
  box-shadow: 4px 0 0 -1px rgba(120, 120, 130, 0.6), 7px 0 0 -1px rgba(200, 200, 210, 0.4);
}
.task.current {
  background: linear-gradient(135deg, rgba(255, 255, 255, 0.85), rgba(255, 255, 255, 0.35));
}
.task svg {
  width: 32px;
  height: 32px;
  margin: 0 auto;
}
.tiny {
  font: bold 9px "Liberation Mono", monospace;
}
.tray {
  margin-left: auto;
  margin-right: 7px;
  display: flex;
  align-items: center;
  gap: 7px;
}
.tray svg {
  width: 18px;
  height: 18px;
}
.tray svg:nth-child(3),
.tray svg:nth-child(4) {
  width: 12px;
  height: 22px;
}
.clock {
  width: 68px;
  padding-top: 1px;
  color: #fff;
  font: 12px/18px "Open Sans", sans-serif;
  text-align: center;
}
.show-desktop {
  width: 14px;
  border: 1px solid #8c8c98;
  background: linear-gradient(135deg, rgba(255, 255, 255, 0.4), rgba(255, 255, 255, 0.1));
}
```
